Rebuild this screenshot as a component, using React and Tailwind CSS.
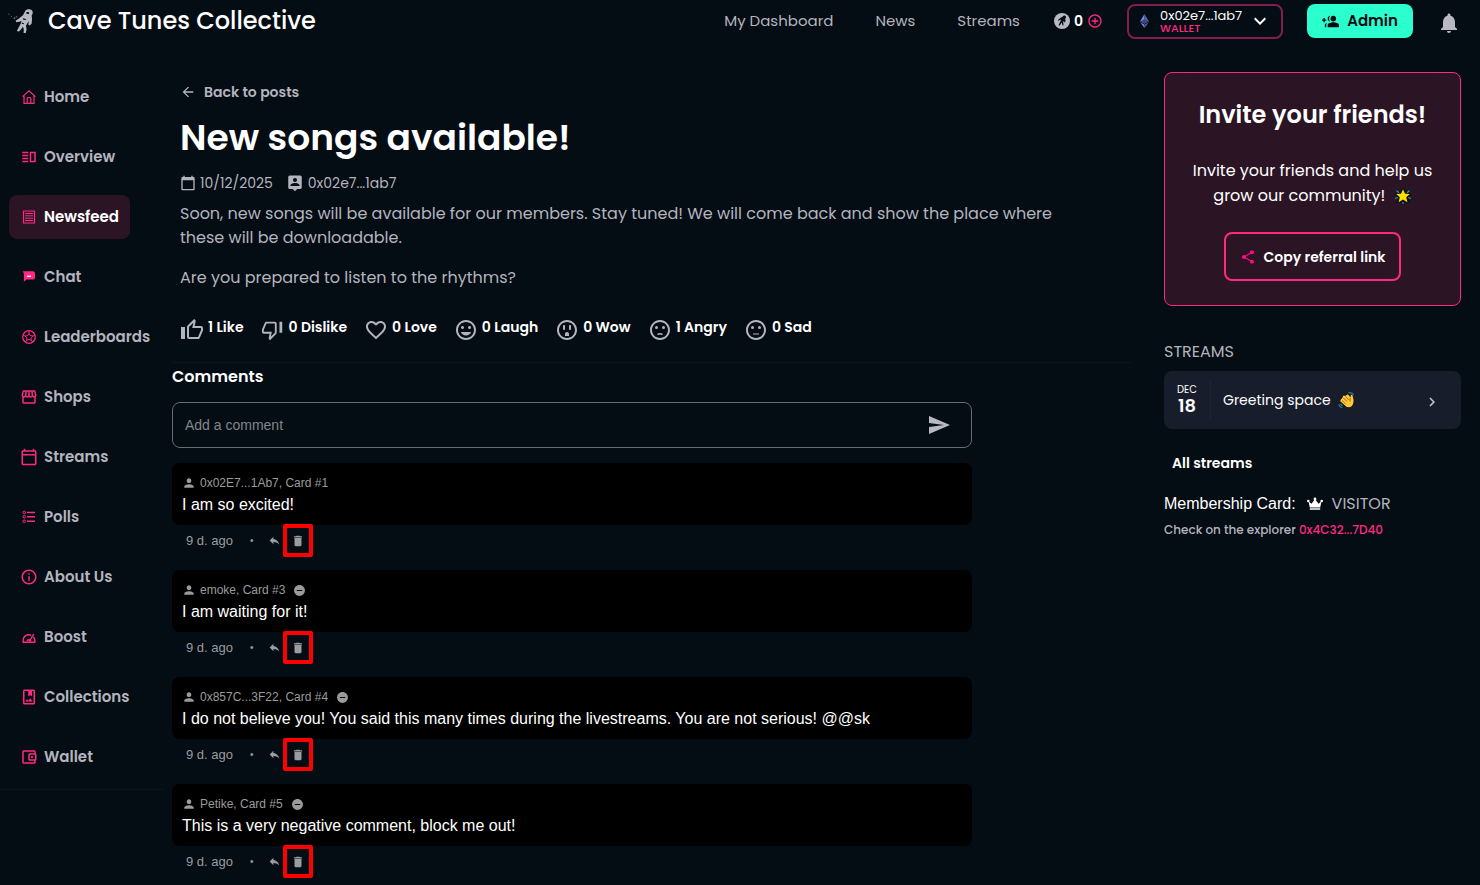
import React, { useState } from 'react';
import {
  MdAddCircleOutline,
  MdArrowBack,
  MdCalendarToday,
  MdDelete,
  MdFavoriteBorder,
  MdGroupAdd,
  MdInfoOutline,
  MdKeyboardArrowDown,
  MdKeyboardArrowRight,
  MdNotifications,
  MdOutlineAccountBalanceWallet,
  MdOutlineCalendarToday,
  MdOutlineInsertEmoticon,
  MdOutlineOutlet,
  MdOutlinePhotoAlbum,
  MdOutlineStorefront,
  MdOutlineVerticalSplit,
  MdPerson,
  MdRemoveCircle,
  MdReply,
  MdSend,
  MdSentimentDissatisfied,
  MdSentimentNeutral,
  MdShare,
} from 'react-icons/md';

const HomeIcon = ({ className }) => (
  <svg viewBox="-2 -2 18 18" className={className} fill="none" stroke="currentColor" strokeWidth="1.2">
    <path d="M0.6 6.6 7 0.9l6.4 5.7M2 5.6v7.7h10V5.6M5.2 13.3V8.6a1 1 0 0 1 1-1h1.6a1 1 0 0 1 1 1v4.7" />
  </svg>
);

const NewsIcon = ({ className }) => (
  <svg viewBox="-2 -2 18 18" className={className} fill="none" stroke="currentColor">
    <path strokeWidth="1.2" d="M1.500 1h11v12h-11z" />
    <path strokeWidth="1" d="M3 3.500h8M3 5.800h8M3 8.200h8M3 10.500h8" />
  </svg>
);

const ChatIcon = ({ className }) => (
  <svg viewBox="-2 -2 18 18" className={className}>
    <path
      fill="currentColor"
      d="M.8 1.200h10a2.200 2.200 0 0 1 2.200 2.200v4a2.200 2.200 0 0 1-2.200 2.200H4.400L1.900 11.800V3.400z"
    />
    <path fill="#fff" d="M5 5.600h4v1.300H5z" />
  </svg>
);

const LeaderIcon = ({ className }) => (
  <svg viewBox="-2 -2 18 18" className={className} fill="none" stroke="currentColor">
    <circle cx="7" cy="7" r="6.300" strokeWidth="1.300" />
    <path
      strokeWidth="1"
      d="m7 3.200 1.200 2.400 2.700.4-1.900 1.900.4 2.600L7 9.300l-2.400 1.200.4-2.600L3.100 6l2.700-.4zM7 .8v2.400M10.900 6l2-.8M3.100 6l-2-.8M9.400 10.500l1.200 1.600M4.600 10.500l-1.200 1.600"
    />
  </svg>
);

const PollIcon = ({ className }) => (
  <svg viewBox="-2 -2 18 18" className={className} fill="none" stroke="currentColor">
    <path strokeWidth="1.600" d="M5 2.500h8M5 6.800h8M5 11.300h8" />
    <circle cx="2.200" cy="2.500" r="1.300" />
    <circle cx="2.200" cy="6.800" r="1.300" />
    <circle cx="2.200" cy="11.300" r="1.300" />
  </svg>
);

const BoostIcon = ({ className }) => (
  <svg viewBox="-2 -2 18 18" className={className} fill="none" stroke="currentColor" strokeWidth="1.400">
    <path d="M9.200 5.300A5.600 5.600 0 0 0 1.200 10.500v1.700h11.600v-1.700a5.600 5.600 0 0 0-1.300-3.500" />
    <path d="m7.300 11.500 4.400-7.300" />
    <path d="M5.200 11.500a1.800 1.800 0 0 1 3.600 0" />
  </svg>
);

const PersonCard = ({ className }) => (
  <svg viewBox="0 0 24 24" className={className} fill="currentColor">
    <path d="M19 2H5a2 2 0 0 0-2 2v14a2 2 0 0 0 2 2h4l3 3 3-3h4a2 2 0 0 0 2-2V4a2 2 0 0 0-2-2zm-7 3.300a2.700 2.700 0 1 1 0 5.400 2.700 2.700 0 0 1 0-5.400zM18 16H6v-.9c0-2 4-3.100 6-3.100s6 1.100 6 3.100z" />
  </svg>
);

const Ethereum = ({ className }) => (
  <svg viewBox="0 0 10 16" className={className}>
    <path d="M5 0 0 8.200 5 11z" fill="#7f8ad0" />
    <path d="m5 0 5 8.200L5 11z" fill="#5560a8" />
    <path d="m0 8.200 5-2.300 5 2.300L5 11z" fill="#3c4688" />
    <path d="M0 9.400 5 16v-3.700z" fill="#7f8ad0" />
    <path d="M10 9.400 5 16v-3.700z" fill="#5560a8" />
  </svg>
);

const Crown = ({ className }) => (
  <svg viewBox="0 0 16 14" className={className} fill="currentColor">
    <path d="m1.500 4.200 3 2.600L8 2l3.500 4.800 3-2.600-1.300 6.300H2.800zM2.800 11.300h10.400v1.500H2.800z" />
    <circle cx="1.300" cy="4" r="1.300" />
    <circle cx="14.700" cy="4" r="1.300" />
    <circle cx="8" cy="2" r="1.400" />
  </svg>
);

const ThumbUp = ({ className }) => (
  <svg viewBox="0 0 24 24" className={className} fill="currentColor">
    <path d="M5 9v12H1V9h4m4 12a2 2 0 0 1-2-2V9c0-.55.22-1.05.59-1.41L14.17 1l1.06 1.06c.27.27.44.64.44 1.05l-.03.32L14.69 8H21a2 2 0 0 1 2 2v2c0 .26-.05.5-.14.73l-3.02 7.05C19.54 20.5 18.83 21 18 21H9m0-2h9.03L21 12v-2h-8.79l1.13-5.32L9 9.03V19z" />
  </svg>
);

const ThumbDown = ({ className }) => (
  <svg viewBox="0 -1 26 26" className={className} fill="currentColor">
    <path d="M20 15V3h3v12h-3M15 3a2 2 0 0 1 2 2v10c0 .55-.22 1.05-.59 1.41L9.83 23l-1.06-1.06a1.5 1.5 0 0 1-.44-1.06l.03-.31.95-4.57H3a2 2 0 0 1-2-2v-2c0-.26.05-.5.14-.73l3.02-7.05C4.46 3.5 5.17 3 6 3h9m0 2H5.97L3 12v2h8.78l-1.13 5.32L15 14.97V5z" />
  </svg>
);

const Astronaut = ({ className }) => (
  <svg viewBox="0 0 24 24" className={className} fill="currentColor">
    <path d="M15.800 3c1-2 4.800-2.400 6.400-.6 1.100 1.400.8 3.400-.4 4.600l.4 3-.4 4.600-1.800 1.500-1.200-.6.4-3.500-1.300 2-1.300 2.400.6 3-.8 3.600-2 .1.2-3.300-.8-2.600-1.900 2.600-1.800 2-1.900-.6 2-3.800 1.800-3.600.5-1.800-2.200.8-2.600.4-.7-1.400 3.400-2.300 3.400-2.900z" />
    <path fill="#040c14" d="m17 3.600 2.600.3-.3 1.700-2.300-.3zM14 9.500l3 .8-.8.8-2.600-.6zM13 13.500l1.800.6-.4.8-1.800-.4z" />
    <path opacity=".6" d="m0 5 1.400.6L1 6.800zM2.300 7l1.400.8-.5.8zM5 9.200l1.500-.8.4 1.400-1.400.6zM7 7.500l1.800.2-1 1.300z" />
  </svg>
);

const AstronautCoin = ({ className }) => (
  <svg viewBox="0 0 16 16" className={className}>
    <circle cx="8" cy="8" r="8" fill="#b9b9c3" />
    <path
      fill="#040c14"
      d="M8.800 3.400c.6-1.200 2.600-1.200 3.100 0 .3.800 0 1.500-.6 1.900l.2 2.900-.9 1.200-.6-.3.2-1.700-1 1.700.3 3.300-1 .1-.7-2.900-2.300 3.100-1-.4 2.100-4.200.4-1.500-2.600 1.200-.5-.8 2.800-2.300z"
    />
  </svg>
);

const Star = () => (
  <svg viewBox="0 0 18 18" role="img" aria-label="star" className="inline-block w-[18px] h-[18px] ml-1 align-[-4px]">
    <path d="m9 0 2.500 4.500L16 2l-1 4 3 1.500-3.500 3 2 5.500-4-.8L9 18l-3.500-2.800-4 .8 2-5.500L0 7.500 3 6 2 2l4.500 2.500z" fill="#111" />
    <path d="M2.500 3.500 5 5.800M15.500 3.500 13 5.800M1 11.500l2.800-1M17 11.500l-2.800-1M9 15v2" stroke="#2492dd" strokeWidth="1.300" />
    <path d="m9 2.200 2 4.500 4.800.4-3.600 3.200 1.200 4.900L9 12.600l-4.400 2.600 1.200-4.900-3.600-3.200 4.800-.4z" fill="#ffdf00" />
  </svg>
);

const Wave = () => (
  <svg viewBox="0 0 18 18" role="img" aria-label="waving hand" className="inline-block w-[17px] h-[17px] ml-1 align-[-4px]">
    <path
      d="M2 8.500 4.200 6l1-2.700L8 3.500l2.500-1.700 2.400 3L13 2.500l2.500-.3 1.500 6c.3 3-.8 6.500-3 7.700-2.500 1.500-5 .6-6.500-1L2 10z"
      fill="#ffc83d"
      stroke="#111"
    />
    <path d="m5.500 6 4 4M8 4.600l3.600 4M4 8.700l4 3.800M13 6c-.4 1.600-.4 2.600 0 4" stroke="#7a5510" strokeWidth=".8" fill="none" />
    <path d="M11 1c2-.6 4.600.3 5.600 2.500M1 13c.3 2 1.700 3.200 3.600 3.500M2.800 12.500c.4 1.200 1 1.700 2 2" stroke="#2b7c98" strokeWidth="1.300" fill="none" />
  </svg>
);

const menu = [
  { label: 'Home', Icon: HomeIcon },
  { label: 'Overview', Icon: MdOutlineVerticalSplit },
  { label: 'Newsfeed', Icon: NewsIcon, active: true },
  { label: 'Chat', Icon: ChatIcon },
  { label: 'Leaderboards', Icon: LeaderIcon },
  { label: 'Shops', Icon: MdOutlineStorefront },
  { label: 'Streams', Icon: MdOutlineCalendarToday },
  { label: 'Polls', Icon: PollIcon },
  { label: 'About Us', Icon: MdInfoOutline },
  { label: 'Boost', Icon: BoostIcon },
  { label: 'Collections', Icon: MdOutlinePhotoAlbum },
  { label: 'Wallet', Icon: MdOutlineAccountBalanceWallet },
];

const reactions = [
  { text: '1 Like', Icon: ThumbUp },
  { text: '0 Dislike', Icon: ThumbDown },
  { text: '0 Love', Icon: MdFavoriteBorder },
  { text: '0 Laugh', Icon: MdOutlineInsertEmoticon },
  { text: '0 Wow', Icon: MdOutlineOutlet },
  { text: '1 Angry', Icon: MdSentimentDissatisfied },
  { text: '0 Sad', Icon: MdSentimentNeutral },
];

const comments = [
  { id: 1, author: '0x02E7...1Ab7, Card #1', text: 'I am so excited!', own: true },
  { id: 2, author: 'emoke, Card #3', text: 'I am waiting for it!' },
  {
    id: 3,
    author: '0x857C...3F22, Card #4',
    text: 'I do not believe you! You said this many times during the livestreams. You are not serious! @@sk',
  },
  { id: 4, author: 'Petike, Card #5', text: 'This is a very negative comment, block me out!' },
];

const Header = () => (
  <header className="flex items-center h-[42px] pl-2 pr-[19px]">
    <Astronaut className="w-[26px] h-[26px] text-[#b9b9c3]" />
    <span className="ml-[14px] text-2xl font-medium">Cave Tunes Collective</span>
    <nav className="ml-auto flex gap-[42px] text-[15px] text-[#b4b4be]">
      <a href="#dashboard">My Dashboard</a>
      <a href="#news">News</a>
      <a href="#streams">Streams</a>
    </nav>
    <div className="ml-[34px] flex items-center gap-1">
      <AstronautCoin className="w-4 h-4" />
      <span className="text-sm font-semibold">0</span>
      <button aria-label="Add credits" className="text-[#ff2a80]">
        <MdAddCircleOutline className="w-4 h-4" />
      </button>
    </div>
    <button className="ml-6 w-[156px] h-[35px] px-[9px] flex items-center rounded-lg border-2 border-[#831d50] text-left">
      <Ethereum className="ml-[2px] w-[9px] h-[14px]" />
      <span className="ml-[11px] flex flex-col whitespace-nowrap">
        <span className="text-[13px] leading-[13px]">0x02e7...1ab7</span>
        <span className="text-[11px] leading-3 font-medium text-[#ff2a80]">WALLET</span>
      </span>
      <MdKeyboardArrowDown className="ml-auto w-6 h-6" />
    </button>
    <button className="ml-6 w-[106px] h-[34px] flex items-center justify-center gap-2 rounded-lg bg-[#2bffce] text-[15px] font-semibold text-[#040c14]">
      <MdGroupAdd className="w-[17px] h-[17px] -scale-x-100" />
      Admin
    </button>
    <button aria-label="Notifications" className="ml-6 text-[#b9b9c3]">
      <MdNotifications className="mt-1 w-6 h-6" />
    </button>
  </header>
);

const Sidebar = () => (
  <nav className="w-[163px] shrink-0 self-start pl-[9px] pt-[33px] pb-[10px] border-b border-[#0c131c]">
    <ul className="flex flex-col gap-4">
      {menu.map(({ label, Icon, active }) => (
        <li key={label} className="flex">
          <a
            href={`#${label}`}
            className={`h-11 px-[11px] flex items-center gap-[6px] rounded-lg text-[15px] font-semibold whitespace-nowrap ${
              active ? 'bg-[#2b1424] text-white' : 'text-[#b4b4be]'
            }`}
          >
            <Icon className="w-[18px] h-[18px] text-[#ff2a80]" />
            {label}
          </a>
        </li>
      ))}
    </ul>
  </nav>
);

const Comment = ({ author, text, own }) => (
  <li>
    <div className="h-[62px] px-[10px] pt-[10px] rounded-lg bg-black">
      <div className="flex items-center h-5 text-xs text-[#9b9b9b]">
        <MdPerson className="w-[14px] h-[14px]" />
        <span className="ml-1">{author}</span>
        {!own && (
          <button aria-label="Block user" className="ml-2">
            <MdRemoveCircle className="w-[13px] h-[13px]" />
          </button>
        )}
      </div>
      <p className="text-base leading-6">{text}</p>
    </div>
    <div className="flex items-center h-[31px] pl-[14px] text-[13px] text-[#9b9ba0]">
      <span className="w-[50px]">9 d. ago</span>
      <span className="ml-[14px] text-[10px]">•</span>
      <button aria-label="Reply" className="ml-[14px]">
        <MdReply className="w-[13px] h-[13px]" />
      </button>
      <button
        aria-label="Delete comment"
        className="ml-[2px] w-[30px] h-[33px] flex items-center justify-center rounded-xs border-4 border-[#ff0000]"
      >
        <MdDelete className="w-[14px] h-[14px]" />
      </button>
    </div>
  </li>
);

const Post = () => {
  const [comment, setComment] = useState('');

  return (
    <main className="flex-1 min-w-0 ml-[9px] pt-10">
      <article className="px-2 text-[#b4b4be]">
        <a href="#posts" className="flex items-center gap-2 h-5 text-sm font-semibold">
          <MdArrowBack className="w-4 h-4" />
          Back to posts
        </a>
        <h1 className="mt-[13px] text-4xl leading-[46px] font-semibold text-white">New songs available!</h1>
        <div className="mt-3 flex items-center h-5 text-sm">
          <MdCalendarToday className="w-4 h-4" />
          <span className="ml-1">10/12/2025</span>
          <PersonCard className="ml-[13px] w-[18px] h-[18px]" />
          <span className="ml-1">0x02e7...1ab7</span>
        </div>
        <p className="mt-[9px] max-w-[900px] text-base leading-6">
          Soon, new songs will be available for our members. Stay tuned! We will come back and show the place where
          these will be downloadable.
        </p>
        <p className="mt-4 text-base leading-6">Are you prepared to listen to the rhythms?</p>
        <div className="mt-6 flex gap-[17px]">
          {reactions.map(({ text, Icon }) => (
            <button
              key={text}
              className="flex gap-1 text-sm leading-[26px] font-semibold text-white whitespace-nowrap"
            >
              <Icon className="mt-1 w-6 h-6 text-[#b4b4be]" />
              {text}
            </button>
          ))}
        </div>
      </article>
      <section className="mt-5 pt-1 border-t border-[#0c131c]">
        <h2 className="text-base leading-5 font-semibold">Comments</h2>
        <div className="max-w-[800px] font-['Liberation_Sans',sans-serif]">
          <form className="mt-[15px] flex items-center h-[46px] px-3 rounded-lg border border-[#696b70]">
            <input
              aria-label="Add a comment"
              value={comment}
              onChange={(e) => setComment(e.target.value)}
              type="text"
              placeholder="Add a comment"
              className="flex-1 text-sm placeholder:text-[#83868a] focus:outline-none"
            />
            <button type="button" aria-label="Send" className="mr-2 text-[#b9b9c3]">
              <MdSend className="w-6 h-6" />
            </button>
          </form>
          <ul className="mt-[15px] flex flex-col gap-[14px]">
            {comments.map((c) => (
              <Comment key={c.id} {...c} />
            ))}
          </ul>
        </div>
      </section>
    </main>
  );
};

const RightPanel = () => (
  <aside className="w-[297px] shrink-0 ml-[33px] mr-[19px] pt-[30px]">
    <section className="h-[234px] pt-6 flex flex-col items-center text-center rounded-lg border border-[#ff2a80] bg-[#2b1424]">
      <h2 className="text-2xl leading-9 font-semibold">Invite your friends!</h2>
      <p className="mt-[25px] px-5 text-base leading-[25px]">
        Invite your friends and help us
        <br />
        grow our community! <Star />
      </p>
      <button className="mt-6 w-[177px] h-[49px] flex items-center justify-center gap-2 rounded-lg border-2 border-[#ff2a80] text-sm font-semibold">
        <MdShare className="w-4 h-4 text-[#ff0a80]" />
        Copy referral link
      </button>
    </section>
    <h3 className="mt-9 text-base leading-5 text-[#b4b4be]">STREAMS</h3>
    <a href="#greeting" className="mt-[9px] h-[58px] flex items-center rounded-lg bg-[#171d2a]">
      <span className="w-[47px] h-10 flex flex-col items-center justify-center border-r border-[#1e2431]">
        <span className="text-[10px] leading-3">DEC</span>
        <span className="text-lg leading-5 font-semibold">18</span>
      </span>
      <span className="ml-3 text-sm">
        Greeting space <Wave />
      </span>
      <MdKeyboardArrowRight className="ml-auto mr-5 mt-1 w-[18px] h-[18px] text-[#c7c7cf]" />
    </a>
    <a href="#all" className="block mt-6 ml-2 text-sm leading-5 font-semibold">
      All streams
    </a>
    <p className="mt-[21px] flex items-center leading-5">
      <span className="font-['Liberation_Sans',sans-serif]">Membership Card:</span>
      <Crown className="ml-[11px] w-4 h-[14px]" />
      <span className="ml-[9px] text-[#b4b4be]">VISITOR</span>
    </p>
    <p className="mt-[6px] text-xs leading-5 font-medium text-[#b4b4be]">
      Check on the explorer{' '}
      <a href="#explorer" className="text-[#ff2a80]">
        0x4C32...7D40
      </a>
    </p>
  </aside>
);

const App = () => (
  <div className="min-h-screen bg-[#040c14] text-white font-['Poppins',Inter,sans-serif]">
    <Header />
    <div className="flex">
      <Sidebar />
      <Post />
      <RightPanel />
    </div>
  </div>
);

export default App;
